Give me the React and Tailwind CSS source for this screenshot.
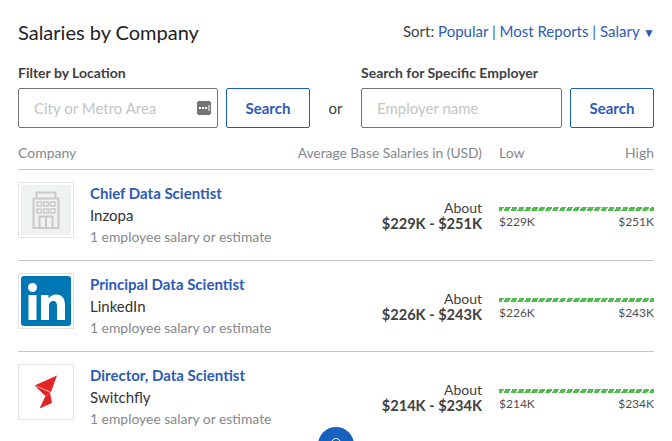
import React from "react";

function Building() {
  return (
    <div className="w-[50px] h-[50px] bg-[#f0f1f1] flex items-center justify-center">
      <svg width="28" height="38" viewBox="0 0 28 38" fill="none" stroke="#c9c9c9" strokeWidth="2">
        <path d="M1.5 37V7.5H26.5V37Z" />
        <path d="M4.5 7V1.5H23.5V7" />
        <rect x="5" y="11" width="4.5" height="4" strokeWidth="1.5" />
        <rect x="11.8" y="11" width="4.5" height="4" strokeWidth="1.5" />
        <rect x="18.5" y="11" width="4.5" height="4" strokeWidth="1.5" />
        <rect x="5" y="18" width="4.5" height="4" strokeWidth="1.5" />
        <rect x="11.8" y="18" width="4.5" height="4" strokeWidth="1.5" />
        <rect x="18.5" y="18" width="4.5" height="4" strokeWidth="1.5" />
        <path d="M7.5 37V25.5H20.5V37M14 25.5V37" />
      </svg>
    </div>
  );
}

function LinkedIn() {
  return (
    <svg width="50" height="50" viewBox="0 0 50 50">
      <rect width="50" height="50" rx="3" fill="#0077b5" />
      <circle cx="11.5" cy="11.5" r="4.5" fill="#fff" />
      <rect x="7.5" y="19" width="8" height="25" fill="#fff" />
      <path d="M20 19h7.5v3.6c1.4-2.5 4-4.2 7.6-4.2 6.6 0 8.9 4.2 8.9 10.5V44h-8V30.5c0-3.2-.8-5.4-3.7-5.4-3 0-4.3 2.2-4.3 5.4V44h-8Z" fill="#fff" />
    </svg>
  );
}

function Switchfly() {
  return (
    <div className="w-[50px] h-[50px] bg-white flex items-center justify-center">
      <svg width="24" height="34" viewBox="0 0 24 34">
        <path d="M23 0.5L17 17L0.5 10.5Z" fill="#e32526" />
        <path d="M0.5 10.5L16 17.5L11.5 21Z" fill="#e02426" />
        <path d="M16 17.5L18 28L5.5 33.5L11.5 21Z" fill="#e32526" />
        <path d="M1 10.5L16.5 17L15.5 19" stroke="#f3a3a3" strokeWidth="0.6" fill="none" />
      </svg>
    </div>
  );
}

function Row({ title, company, about, range, low, high, logo, last }) {
  return (
    <div className={"flex h-[91px] pt-[12px] " + (last ? "" : "border-b border-[#c6c6c6]")}>
      <div className="w-[56px] h-[56px] border border-[#e4e4e4] flex items-center justify-center shrink-0">
        {logo}
      </div>
      <div className="ml-[16px] flex-1 min-w-0">
        <div className="text-[15px] leading-[22px] font-bold text-[#2e5ab8]">{title}</div>
        <div className="text-[15px] leading-[22px] text-[#333]">{company}</div>
        <div className="text-[13.9px] leading-[20px] mt-[1px] text-[#85888c]">{about}</div>
      </div>
      <div className="w-[119px] pt-[18px] text-right text-[#404040]">
        <div className="text-[14px] leading-[16px]">About</div>
        <div className="text-[14.6px] leading-[16px] font-bold">{range}</div>
      </div>
      <div className="ml-[17px] w-[155px] pt-[25px]">
        <div className="h-[4px] bg-[repeating-linear-gradient(-60deg,#52bd4f_0px,#52bd4f_4.5px,#ffffff_4.5px,#ffffff_6px)]" />
        <div className="flex justify-between mt-[3px] text-[12px] leading-[16px] text-[#505050]">
          <span>{low}</span>
          <span>{high}</span>
        </div>
      </div>
    </div>
  );
}

export default function App() {
  return (
    <div className="relative w-[672px] h-[441px] overflow-hidden bg-white pl-[18px] pr-[18px] font-['Lato',sans-serif] text-[#333]">
      <div className="flex justify-between items-start pt-[20px] h-[65px]">
        <h1 className="text-[20px] leading-[24px] text-[#222]">Salaries by Company</h1>
        <div className="text-[15px] leading-[22px] text-[#404040] whitespace-nowrap shrink-0">
          Sort: <span className="text-[#2e5ab8]">Popular</span> <span className="text-[#2e5ab8]">|</span>{" "}
          <span className="text-[#2e5ab8]">Most Reports</span> <span className="text-[#2e5ab8]">|</span>{" "}
          <span className="text-[#2e5ab8]">Salary</span>{" "}
          <span className="inline-block text-[#2e5ab8] text-[12px] -mr-[1px]">▼</span>
        </div>
      </div>
      <div className="flex items-end h-[63px]">
        <div className="w-[200px] shrink-0">
          <div className="text-[14px] leading-[16px] font-bold text-[#404040] mb-[7px]">Filter by Location</div>
          <div className="h-[40px] border border-[#757575] rounded-[2px] flex items-center justify-between pl-[15px] pr-[6px]">
            <span className="text-[15px] text-[#c4c4c4]">City or Metro Area</span>
            <svg width="14" height="14" viewBox="0 0 14 14" className="-mt-[1px]">
              <rect width="14" height="14" rx="2" fill="#757575" />
              <rect x="2" y="6" width="2" height="2" fill="#fff" />
              <rect x="5" y="6" width="2" height="2" fill="#fff" />
              <rect x="8" y="6" width="2" height="2" fill="#fff" />
              <rect x="11.5" y="4" width="1" height="6" fill="#fff" />
            </svg>
          </div>
        </div>
        <button className="ml-[8px] w-[84px] h-[40px] border border-[#1861bf] rounded-[2px] text-[15px] font-bold text-[#2e5ab8]">Search</button>
        <div className="w-[51px] h-[40px] flex items-center justify-center text-[15px] text-[#404040]">or</div>
        <div className="w-[201px] shrink-0">
          <div className="text-[14px] leading-[16px] font-bold text-[#404040] mb-[7px] whitespace-nowrap">Search for Specific Employer</div>
          <div className="h-[40px] border border-[#757575] rounded-[2px] flex items-center pl-[15px]">
            <span className="text-[15px] text-[#c4c4c4]">Employer name</span>
          </div>
        </div>
        <button className="ml-[8px] w-[84px] h-[40px] border border-[#1861bf] rounded-[2px] text-[15px] font-bold text-[#2e5ab8]">Search</button>
      </div>
      <div className="flex h-[42px] items-center pt-[7px] border-b border-[#c6c6c6] text-[14px] text-[#85888c]">
        <span className="flex-1">Company</span>
        <span className="text-[13.8px] mt-[2px]">Average Base Salaries in (USD)</span>
        <span className="ml-[17px] w-[155px] flex justify-between">
          <span>Low</span>
          <span>High</span>
        </span>
      </div>
      <Row title="Chief Data Scientist" company="Inzopa" about="1 employee salary or estimate" range="$229K - $251K" low="$229K" high="$251K" logo={<Building />} />
      <Row title="Principal Data Scientist" company="LinkedIn" about="1 employee salary or estimate" range="$226K - $243K" low="$226K" high="$243K" logo={<LinkedIn />} />
      <Row title="Director, Data Scientist" company="Switchfly" about="1 employee salary or estimate" range="$214K - $234K" low="$214K" high="$234K" logo={<Switchfly />} last />
      <div className="absolute left-[318px] top-[427px] w-[36px] h-[36px] rounded-full bg-[#1861bf] flex justify-center pt-[11px]">
        <div className="w-[10px] h-[10px] rounded-full border border-white" />
      </div>
    </div>
  );
}
